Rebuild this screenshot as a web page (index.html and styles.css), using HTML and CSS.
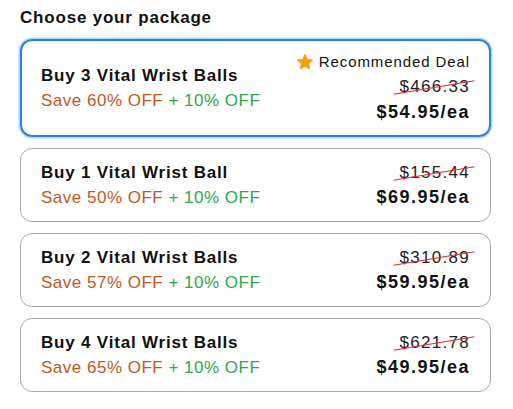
FILE: index.html
```html
<!DOCTYPE html>
<html>
<head>
<meta charset="utf-8">
<link rel="stylesheet" href="styles.css">
</head>
<body>
<div class="page">
  <h2 class="heading">Choose your package</h2>
  <div class="list">
    <div class="card selected">
      <div class="info">
        <div class="title">Buy 3 Vital Wrist Balls</div>
        <div class="save"><span class="orange">Save 60% OFF</span> <span class="green">+ 10% OFF</span></div>
      </div>
      <div class="prices">
        <div class="badge"><svg class="star" viewBox="0 0 24 24" width="18" height="18"><path d="M12 1.8l3.1 6.6 7.2.9-5.3 5 1.4 7.1L12 17.9l-6.4 3.5 1.4-7.1-5.3-5 7.2-.9z" fill="#f7a10a" stroke="#f7a10a" stroke-width="1.2" stroke-linejoin="round"/></svg><span>Recommended Deal</span></div>
        <div class="old">$466.33</div>
        <div class="new">$54.95/ea</div>
      </div>
    </div>
    <div class="card">
      <div class="info">
        <div class="title">Buy 1 Vital Wrist Ball</div>
        <div class="save"><span class="orange">Save 50% OFF</span> <span class="green">+ 10% OFF</span></div>
      </div>
      <div class="prices">
        <div class="old">$155.44</div>
        <div class="new">$69.95/ea</div>
      </div>
    </div>
    <div class="card">
      <div class="info">
        <div class="title">Buy 2 Vital Wrist Balls</div>
        <div class="save"><span class="orange">Save 57% OFF</span> <span class="green">+ 10% OFF</span></div>
      </div>
      <div class="prices">
        <div class="old">$310.89</div>
        <div class="new">$59.95/ea</div>
      </div>
    </div>
    <div class="card">
      <div class="info">
        <div class="title">Buy 4 Vital Wrist Balls</div>
        <div class="save"><span class="orange">Save 65% OFF</span> <span class="green">+ 10% OFF</span></div>
      </div>
      <div class="prices">
        <div class="old">$621.78</div>
        <div class="new">$49.95/ea</div>
      </div>
    </div>
  </div>
</div>
</body>
</html>
```

FILE: styles.css
```css
html, body {
  margin: 0;
  padding: 0;
  background: #ffffff;
}
body {
  font-family: "Liberation Sans", Arial, sans-serif;
  color: #111111;
}
.page {
  padding: 7px 22px 0 20px;
}
.heading {
  margin: 0;
  font-size: 17px;
  line-height: 22px;
  font-weight: bold;
  letter-spacing: 0.8px;
  color: #111;
}
.list {
  display: flex;
  flex-direction: column;
  gap: 11px;
  margin-top: 10px;
}
.card {
  display: flex;
  justify-content: space-between;
  align-items: center;
  border: 1px solid #a9a9a9;
  border-radius: 12px;
  padding: 11px 20px 11px 20px;
  min-height: 50px;
}
.card.selected {
  border: 2px solid #2c7fe6;
  box-shadow: 0 0 0 1.5px rgba(120, 180, 245, 0.55);
  padding: 8px 19px 9px 19px;
}
.info {
  display: flex;
  flex-direction: column;
}
.title {
  font-size: 17px;
  line-height: 25px;
  font-weight: bold;
  letter-spacing: 0.8px;
}
.save {
  font-size: 17px;
  line-height: 25px;
  letter-spacing: 0.5px;
}
.orange { color: #c4571c; }
.green { color: #2fa84b; }
.prices {
  display: flex;
  flex-direction: column;
  align-items: flex-end;
}
.badge {
  display: flex;
  align-items: center;
  gap: 5px;
  font-size: 15px;
  line-height: 25px;
  letter-spacing: 0.9px;
}
.star { display: block; }
.old {
  position: relative;
  font-size: 17px;
  line-height: 25px;
  letter-spacing: 1.3px;
  color: #222;
}
.old::after {
  content: "";
  position: absolute;
  left: -6px;
  right: -5px;
  top: 13px;
  height: 1.2px;
  background: #e8262c;
  transform: rotate(-9.5deg);
}
.new {
  font-size: 18px;
  line-height: 25px;
  font-weight: bold;
  letter-spacing: 1.5px;
}
.selected .new {
  line-height: 27px;
}
```
